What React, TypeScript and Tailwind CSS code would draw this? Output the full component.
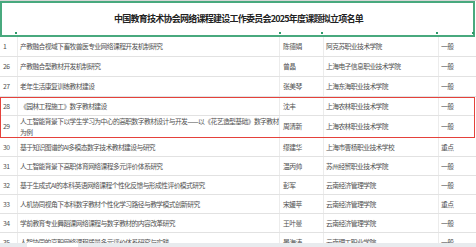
import React from 'react';

type Row = { no: string; title: React.ReactNode; name: string; school: string; level: string; h: string };

const rows: Row[] = [
  { no: '1', title: '产教融合视域下畜牧兽医专业网络课程开发机制研究', name: '陈德娟', school: '阿克苏职业技术学院', level: '一般', h: 'h-[20px]' },
  { no: '26', title: '产教融合型教材开发机制研究', name: '曾晶', school: '上海电子信息职业技术学院', level: '一般', h: 'h-[20px]' },
  { no: '27', title: '老年生活康复训练教材建设', name: '张美琴', school: '上海东海职业技术学院', level: '一般', h: 'h-[20px]' },
];

const marked: Row[] = [
  { no: '28', title: '《园林工程施工》数字教材建设', name: '沈丰', school: '上海农林职业技术学院', level: '一般', h: 'h-[19px]' },
  {
    no: '29',
    title: (
      <>
        人工智能背景下以学生学习为中心的高职数字教材设计与开发——以《花艺造型基础》数字教材
        <br />
        为例
      </>
    ),
    name: '周清新',
    school: '上海农林职业技术学院',
    level: '一般',
    h: 'h-[22px]',
  },
];

const rest: Row[] = [
  { no: '30', title: '基于知识图谱的AI多模态数字技术教材建设与研究', name: '缪建华', school: '上海市曹杨职业技术学校', level: '重点', h: 'h-[19px]' },
  { no: '31', title: '人工智能背景下高职体育网络课程多元评价体系研究', name: '温丙帅', school: '苏州经贸职业技术学院', level: '一般', h: 'h-[19px]' },
  { no: '32', title: '基于生成式AI的本科英语网络课程个性化反馈与形成性评价模式研究', name: '彭军', school: '云南经济管理学院', level: '一般', h: 'h-[19px]' },
  { no: '33', title: '人机协同视角下本科数字教材个性化学习路径与教学模式创新研究', name: '宋媛苹', school: '云南经济管理学院', level: '重点', h: 'h-[19px]' },
  { no: '34', title: '学前教育专业舞蹈课网络课程与数字教材的内容改革研究', name: '王叶曼', school: '云南经济管理学院', level: '一般', h: 'h-[19px]' },
];

// last row sits half under the sheet tab bar, as in the screenshot
const last: Row = { no: '35', title: '人智协同的高职网络课程质量多元评价体系研究与实践', name: '晏海涛', school: '云南理工职业学院', level: '一般', h: 'h-[19px]' };

const cell = 'flex items-center border-r border-[#ececec] overflow-hidden whitespace-nowrap';

const TableRow = ({ r }: { r: Row }) => (
  <div className={`grid grid-cols-[18px_262px_44px_115px_1fr] border-b border-[#e2e2e2] ${r.h}`}>
    <div className={`${cell} pl-[3px]`}>{r.no}</div>
    <div className={`${cell} pl-[2px] leading-[11px] whitespace-normal`}>
      <span>{r.title}</span>
    </div>
    <div className={`${cell} pl-[3px]`}>{r.name}</div>
    <div className={`${cell} pl-[2px]`}>{r.school}</div>
    <div className="flex items-center pl-[2px]">{r.level}</div>
  </div>
);

export default function App() {
  return (
    <div
      className="w-[476px] h-[247px] overflow-hidden bg-white flex flex-col text-[6.8px] tracking-[-0.6px] text-[#505050]"
      style={{ fontFamily: '"Noto Sans CJK SC", "Noto Sans", sans-serif' }}
    >
      <div className="h-[243px] overflow-hidden shrink-0">
        <div className="border-t border-[#d6d6d6]">
          <div className="relative h-[36px] border-2 border-[#48a97e] mr-[1px] flex items-center justify-center">
            <h1 className="text-[9px] tracking-[-0.75px] font-bold text-[#222] pl-[2px]">
              中国教育技术协会网络课程建设工作委员会2025年度课题拟立项名单
            </h1>
            <span className="absolute left-[13px] bottom-[1px] w-[2px] h-[2px] bg-[#2f9a6a]" />
            <span className="absolute left-[277px] bottom-[1px] w-[2px] h-[2px] bg-[#2f9a6a]" />
            <span className="absolute left-[319px] bottom-[1px] w-[2px] h-[2px] bg-[#2f9a6a]" />
            <span className="absolute left-[434px] bottom-[1px] w-[2px] h-[2px] bg-[#2f9a6a]" />
            <span className="absolute right-[-1px] bottom-[1px] w-[2px] h-[2px] bg-[#2f9a6a]" />
          </div>
        </div>
        {rows.map((r) => (
          <TableRow key={r.no} r={r} />
        ))}
        <div className="outline outline-1 -outline-offset-1 outline-[#e5413b] mr-[1px]">
          {marked.map((r) => (
            <TableRow key={r.no} r={r} />
          ))}
        </div>
        {rest.map((r) => (
          <TableRow key={r.no} r={r} />
        ))}
        <TableRow r={last} />
      </div>
      <div className="flex-1 bg-[#e8ebee] flex items-start">
        <div className="ml-[27px] w-[51px] h-[20px] bg-white" />
      </div>
    </div>
  );
}
